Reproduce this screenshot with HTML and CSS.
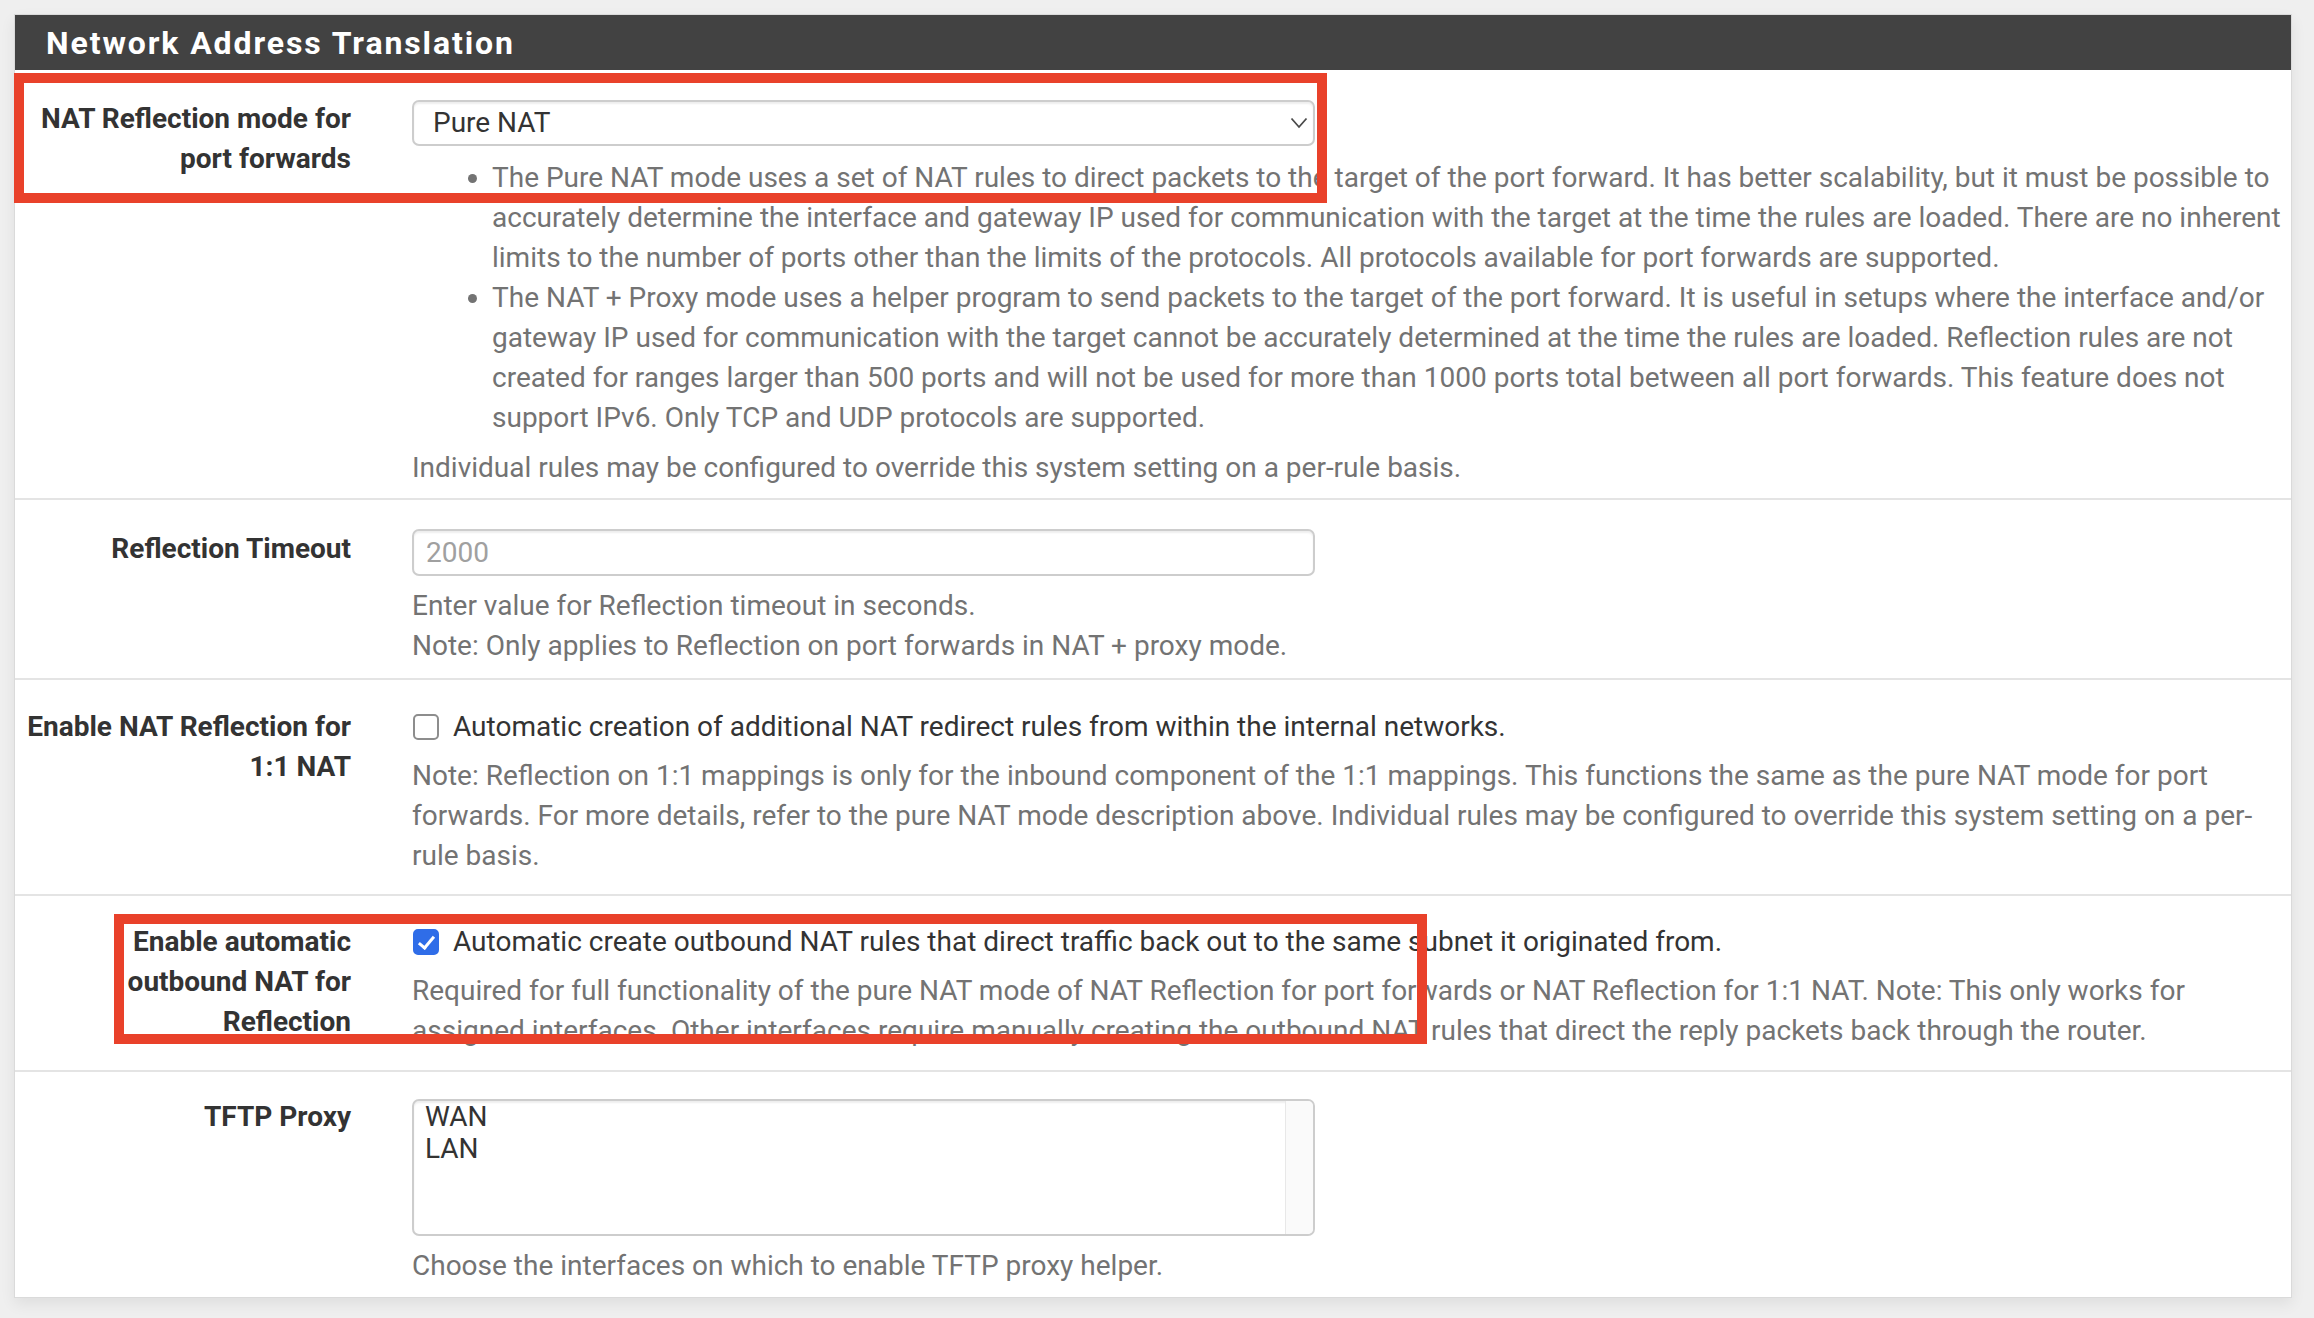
FILE: index.html
```html
<!DOCTYPE html>
<html lang="en">
<head>
<meta charset="utf-8">
<title>Network Address Translation</title>
<link rel="stylesheet" href="styles.css">
</head>
<body>
<div class="page">
  <div class="panel">
    <div class="panel-heading">
      <h2 class="panel-title">Network Address Translation</h2>
    </div>
    <div class="panel-body">
      <div class="form-row row-first">
        <div class="form-label">NAT Reflection mode for<br>port forwards</div>
        <div class="form-field">
          <div class="select-box">
            <span class="select-value">Pure NAT</span>
            <svg class="chevron" width="18" height="12" viewBox="0 0 18 12"><polyline points="1.5,1.5 9,10 16.5,1.5" fill="none" stroke="#4a4a4a" stroke-width="1.8"/></svg>
          </div>
          <div class="help help-list">
            <ul>
              <li>The Pure NAT mode uses a set of NAT rules to direct packets to the target of the port forward. It has better scalability, but it must be possible to accurately determine the interface and gateway IP used for communication with the target at the time the rules are loaded. There are no inherent limits to the number of ports other than the limits of the protocols. All protocols available for port forwards are supported.</li>
              <li>The NAT + Proxy mode uses a helper program to send packets to the target of the port forward. It is useful in setups where the interface and/or gateway IP used for communication with the target cannot be accurately determined at the time the rules are loaded. Reflection rules are not created for ranges larger than 500 ports and will not be used for more than 1000 ports total between all port forwards. This feature does not support IPv6. Only TCP and UDP protocols are supported.</li>
            </ul>
            Individual rules may be configured to override this system setting on a per-rule basis.
          </div>
        </div>
      </div>

      <div class="form-row row-input">
        <div class="form-label">Reflection Timeout</div>
        <div class="form-field">
          <input class="text-input" type="text" placeholder="2000">
          <div class="help">Enter value for Reflection timeout in seconds.<br>Note: Only applies to Reflection on port forwards in NAT + proxy mode.</div>
        </div>
      </div>

      <div class="form-row row-check">
        <div class="form-label">Enable NAT Reflection for<br>1:1 NAT</div>
        <div class="form-field">
          <label class="check-line"><input class="check" type="checkbox"><span>Automatic creation of additional NAT redirect rules from within the internal networks.</span></label>
          <div class="help help-check">Note: Reflection on 1:1 mappings is only for the inbound component of the 1:1 mappings. This functions the same as the pure NAT mode for port forwards. For more details, refer to the pure NAT mode description above. Individual rules may be configured to override this system setting on a per-rule basis.</div>
        </div>
      </div>

      <div class="form-row row-check row-check2">
        <div class="form-label">Enable automatic<br>outbound NAT for<br>Reflection</div>
        <div class="form-field">
          <label class="check-line"><input class="check" type="checkbox" checked><span>Automatic create outbound NAT rules that direct traffic back out to the same subnet it originated from.</span></label>
          <div class="help help-check">Required for full functionality of the pure NAT mode of NAT Reflection for port forwards or NAT Reflection for 1:1 NAT. Note: This only works for assigned interfaces. Other interfaces require manually creating the outbound NAT rules that direct the reply packets back through the router.</div>
        </div>
      </div>

      <div class="form-row row-multi">
        <div class="form-label">TFTP Proxy</div>
        <div class="form-field">
          <div class="multi-select">
            <div class="options">
              <div class="option">WAN</div>
              <div class="option">LAN</div>
            </div>
            <div class="scroll-track"></div>
          </div>
          <div class="help">Choose the interfaces on which to enable TFTP proxy helper.</div>
        </div>
      </div>
    </div>
  </div>

  <div class="callout callout-mode"></div>
  <div class="callout callout-outbound"></div>
</div>
</body>
</html>
```

FILE: styles.css
```css
html, body {
  margin: 0;
  padding: 0;
}

body {
  background: #efefef;
  font-family: Roboto, "Liberation Sans", Arial, sans-serif;
  font-size: 28px;
  line-height: 40px;
  color: #333333;
}

.page {
  position: relative;
  box-sizing: border-box;
  width: 2314px;
  min-height: 1318px;
  padding: 14px 22px 20px 14px;
}

.panel {
  background: #ffffff;
  border: 1px solid #dadada;
  box-shadow: 0 6px 14px rgba(0, 0, 0, 0.07);
}

.panel-heading {
  background: #424242;
  height: 55px;
  display: flex;
  align-items: center;
  padding-left: 31px;
}

.panel-title {
  margin: 0;
  color: #ffffff;
  font-size: 32px;
  line-height: 40px;
  font-weight: 700;
  letter-spacing: 1.9px;
}

.form-row {
  display: flex;
  border-top: 2px solid #e4e4e4;
}

.row-first {
  border-top: 0;
  padding: 29px 0 10px;
}

.row-input {
  padding: 29px 0 12px;
}

.row-check {
  padding: 27px 0 18px;
}

.row-check2 {
  padding: 26px 0 19px;
}

.row-multi {
  padding: 27px 0 11px;
}

.form-label {
  box-sizing: border-box;
  width: 367px;
  flex: none;
  padding-right: 31px;
  text-align: right;
  font-weight: 700;
  color: #333333;
}

.row-multi .form-label {
  margin-top: -2px;
}

.form-field {
  flex: 1;
  min-width: 0;
  padding-left: 30px;
  padding-right: 9px;
}

.select-box,
.text-input,
.multi-select {
  box-sizing: border-box;
  width: 903px;
  border: 2px solid #cdcdcd;
  border-radius: 7px;
  background: #ffffff;
  box-shadow: inset 0 2px 2px rgba(0, 0, 0, 0.07);
}

.select-box {
  display: flex;
  align-items: center;
  height: 46px;
  margin-top: 1px;
  padding: 0 5px 0 19px;
  color: #333333;
}

.select-value {
  flex: 1;
}

.chevron {
  display: block;
  flex: none;
}

.text-input {
  display: block;
  height: 47px;
  padding: 0 12px;
  font-family: inherit;
  font-size: 28px;
  color: #333333;
  outline: none;
}

.text-input::placeholder {
  color: #a0a0a0;
}

.help {
  color: #737373;
  margin-top: 10px;
}

.help-list {
  margin-top: 12px;
}

.help ul {
  margin: 0 0 10px;
  padding-left: 80px;
}

.help-check {
  margin-top: 9px;
}

.check-line {
  display: flex;
  align-items: center;
  height: 40px;
  color: #333333;
}

.check {
  appearance: none;
  -webkit-appearance: none;
  box-sizing: border-box;
  position: relative;
  flex: none;
  width: 26px;
  height: 26px;
  margin: 0 14px 0 1px;
  border: 2px solid #8d8d8d;
  border-radius: 5px;
  background: #ffffff;
}

.check:checked {
  background: #2f6de8;
  border-color: #2f6de8;
}

.check:checked::after {
  content: "";
  position: absolute;
  left: 7px;
  top: 2px;
  width: 6px;
  height: 13px;
  border-right: 3px solid #ffffff;
  border-bottom: 3px solid #ffffff;
  transform: rotate(40deg);
}

.multi-select {
  display: flex;
  height: 137px;
  overflow: hidden;
}

.options {
  flex: 1;
  padding-left: 11px;
  color: #333333;
}

.option {
  line-height: 32px;
}

.scroll-track {
  width: 27px;
  background: #fafafa;
  border-left: 1px solid #e8e8e8;
}

.callout {
  position: absolute;
  box-sizing: border-box;
  width: 1313px;
  height: 130px;
  border: 10px solid #e9412a;
  pointer-events: none;
}

.callout-mode {
  left: 14px;
  top: 73px;
}

.callout-outbound {
  left: 114px;
  top: 914px;
}
```
